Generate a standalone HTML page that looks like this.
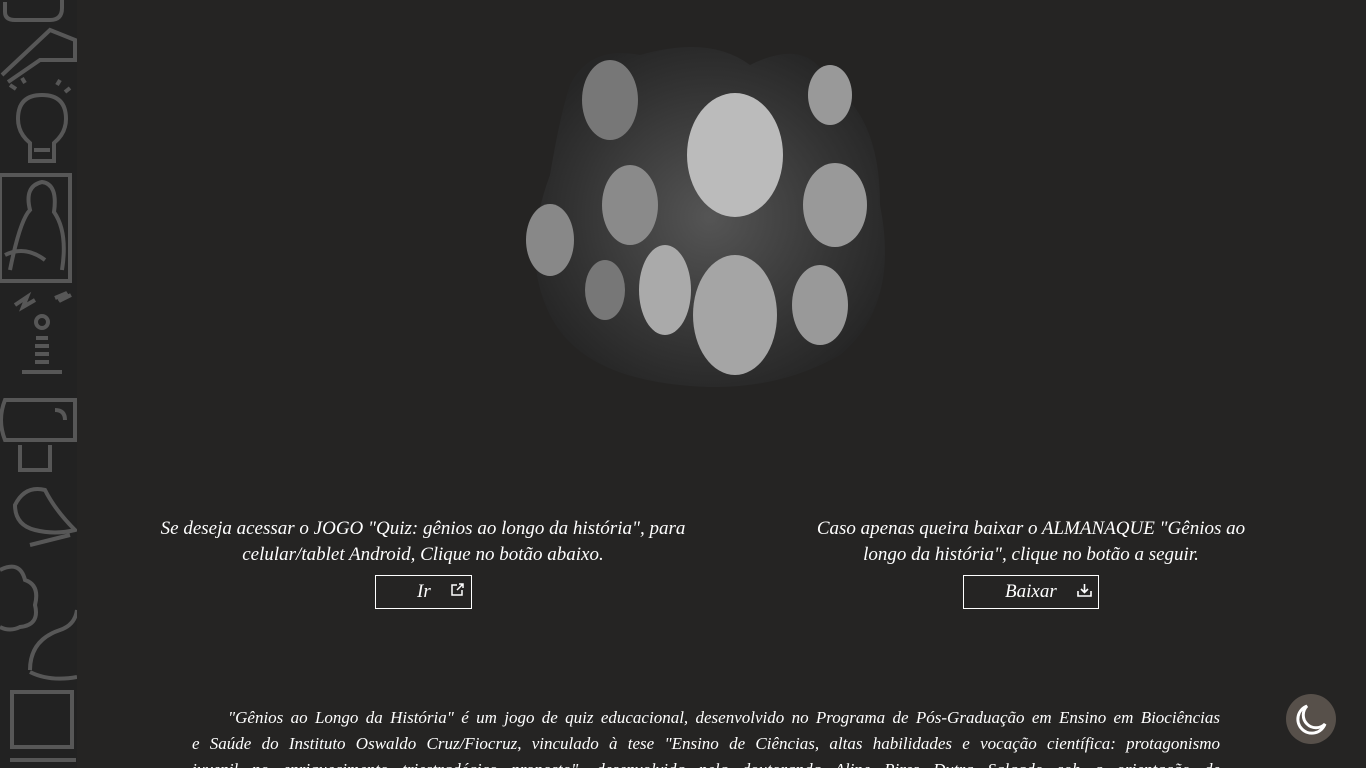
<!DOCTYPE html>
<html style="overflow:hidden;height:768px"><head><meta charset="utf-8"><style>
body{margin:0;width:1366px;height:768px;overflow:hidden;background:#252423;font-family:"Liberation Serif",serif;color:#fff;position:relative}
.side{position:absolute;left:0;top:0;width:77px;height:768px;background:#222}
.p{position:absolute;text-align:center;font-style:italic;font-size:19px;line-height:26px}
.btn{position:absolute;border:1px solid #fff;height:34px;box-sizing:border-box;font-size:19px;line-height:32px;font-style:italic}
.txt{position:absolute;left:192px;top:705px;width:1028px;height:63px;overflow:hidden;font-style:italic;font-size:17px;line-height:26px}
.txt div{text-align:justify;text-align-last:justify;white-space:nowrap}
.moon{position:absolute;left:1286px;top:694px;width:50px;height:50px;border-radius:50%;background:#57504a}
</style></head><body>
<div class="side">
<svg width="77" height="768" fill="none" stroke="#575757" stroke-width="4">
<path d="M5 2 v10 q0 8 10 8 h35 q12 0 12-12 V0"/>
<path d="M2 75 L50 30 l25 10 v20 H40 L8 82"/>
<path d="M42 95 q-24 0 -24 24 q0 14 12 24 v18 h24 v-18 q12-10 12-24 q0-24-24-24z M34 150 h16"/>
<path d="M10 85 l6 4 M22 78 l3 5 M60 80 l-3 5 M70 88 l-5 4"/>
<rect x="0" y="175" width="70" height="106"/>
<path d="M10 270 q10-50 20-60 q-6-24 12-28 q16 2 12 30 q14 20 8 58 M5 255 q20-10 40 5"/>
<path d="M15 305 l12-8 l-4 10 l12-7 M55 298 l12-5 l-8 8 l12-6"/>
<circle cx="42" cy="322" r="6"/><path d="M36 338h12 M35 346h14 M35 354h14 M35 362h14 M22 372h40"/>
<path d="M5 400 h70 v40 h-70 q-8-20 0-40z M55 410 q10 0 10 10 M20 445 v25 h30 v-25"/>
<path d="M15 505 q10-20 30-15 q10 20 30 40 q-20 5-40 0 q-20-5-20-25z M30 545 l40-10"/>
<path d="M0 570 q20-10 25 10 q15 5 10 25 q5 20-15 22 q-10 5-20 0"/>
<path d="M30 670 q0-30 30-40 q15-5 17-20 M30 672 q20 10 47 5"/>
<rect x="12" y="692" width="60" height="55"/><path d="M10 760 h66"/>
</svg>
</div>
<svg style="position:absolute;left:510px;top:25px" width="400" height="380">
<defs><radialGradient id="g" cx="50%" cy="50%" r="55%"><stop offset="0" stop-color="#555"/><stop offset=".7" stop-color="#333"/><stop offset="1" stop-color="#262626"/></radialGradient></defs>
<path d="M60 60 q20-40 70-30 q70-20 110 10 q60-30 80 20 q50 30 50 120 q20 100-40 150 q-70 40-160 30 q-100-10-130-70 q-30-60 0-140 q10-60 20-90z" fill="url(#g)"/>
<ellipse cx="100" cy="75" rx="28" ry="40" fill="#777"/>
<ellipse cx="320" cy="70" rx="22" ry="30" fill="#999"/>
<ellipse cx="225" cy="130" rx="48" ry="62" fill="#bbb"/>
<ellipse cx="120" cy="180" rx="28" ry="40" fill="#8a8a8a"/>
<ellipse cx="325" cy="180" rx="32" ry="42" fill="#999"/>
<ellipse cx="225" cy="290" rx="42" ry="60" fill="#a5a5a5"/>
<ellipse cx="155" cy="265" rx="26" ry="45" fill="#aaa"/>
<ellipse cx="310" cy="280" rx="28" ry="40" fill="#999"/>
<ellipse cx="40" cy="215" rx="24" ry="36" fill="#888"/>
<ellipse cx="95" cy="265" rx="20" ry="30" fill="#777"/>
</svg>
<div class="p" style="left:150px;top:516px;width:546px">Se deseja acessar o JOGO "Quiz: gênios ao longo da história", para celular/tablet Android, Clique no botão abaixo.</div>
<div class="btn" style="left:375px;top:575px;width:97px"><span style="position:absolute;left:41px">Ir</span>
<svg style="position:absolute;left:75px;top:7px" width="13" height="13" fill="none" stroke="#fff" stroke-width="1.5"><path d="M6 2H1v10h10V7 M8 1h4v4 M12 1L6 7"/></svg></div>
<div class="p" style="left:800px;top:516px;width:462px">Caso apenas queira baixar o ALMANAQUE "Gênios ao longo da história", clique no botão a seguir.</div>
<div class="btn" style="left:963px;top:575px;width:136px"><span style="position:absolute;left:41px">Baixar</span>
<svg style="position:absolute;left:113px;top:7px" width="15" height="14" fill="none" stroke="#fff" stroke-width="1.6"><path d="M1 8v5h13V8 M7.5 1v8 M4 6l3.5 3.5L11 6"/></svg></div>
<div class="txt">
<div style="padding-left:36px">"Gênios ao Longo da História" é um jogo de quiz educacional, desenvolvido no Programa de Pós-Graduação em Ensino em Biociências</div>
<div>e Saúde do Instituto Oswaldo Cruz/Fiocruz, vinculado à tese "Ensino de Ciências, altas habilidades e vocação científica: protagonismo</div>
<div>juvenil no enriquecimento triestradégico proposto", desenvolvida pela doutoranda Aline Pires Dutra Salgado sob a orientação de</div>
</div>
<div class="moon"><svg width="50" height="50" fill="none" stroke="#fff" stroke-width="3"><path d="M21 12 a14 14 0 1 0 18 18 a12 12 0 0 1 -18 -18z"/></svg></div>
</body></html>
